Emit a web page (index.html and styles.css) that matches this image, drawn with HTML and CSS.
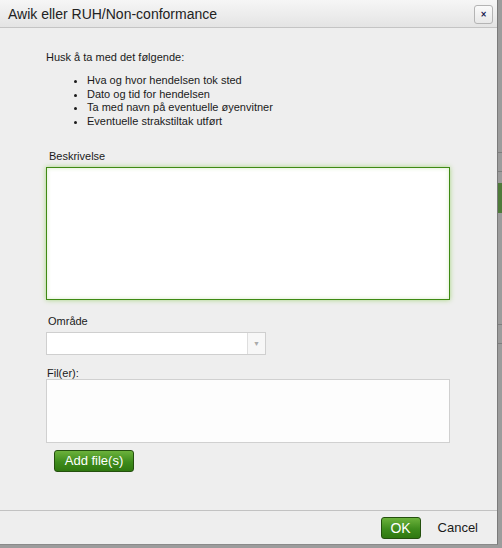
FILE: index.html
```html
<!DOCTYPE html>
<html>
    <head>
        <title>Awik eller RUH/Non-conformance</title>
        <link rel="stylesheet" href="styles.css">
    </head>
    <body>
        <div class="dialog">
            <div class="titlebar">
                <span class="title">Awik eller RUH/Non-conformance</span>
                <button class="close">&#215;</button>
            </div>
            <div class="content">
                <p class="intro">Husk å ta med det følgende:</p>
                <ul class="tips">
                    <li>Hva og hvor hendelsen tok sted</li>
                    <li>Dato og tid for hendelsen</li>
                    <li>Ta med navn på eventuelle øyenvitner</li>
                    <li>Eventuelle strakstiltak utført</li>
                </ul>
                <label class="field-label desc-label">Beskrivelse</label>
                <textarea class="description"></textarea>
                <label class="field-label area-label">Område</label>
                <div class="select">
                    <span class="select-value"></span>
                    <span class="select-arrow">&#9660;</span>
                </div>
                <label class="field-label files-label">Fil(er):</label>
                <div class="files"></div>
                <button class="green add-files">Add file(s)</button>
            </div>
            <div class="footer">
                <button class="green ok">OK</button>
                <button class="cancel">Cancel</button>
            </div>
        </div>
    </body>
</html>
```

FILE: styles.css
```css
body {
    margin: 0;
    height: 548px;
    overflow: hidden;
    font-family: 'Liberation Sans', Arial, sans-serif;
    color: #1a1a1a;
    background: linear-gradient(to bottom,
        #9c9c9c 0, #9c9c9c 152px, #7e7e7e 152px, #7e7e7e 153px,
        #9c9c9c 153px, #9c9c9c 171px, #7e7e7e 171px, #7e7e7e 172px,
        #9c9c9c 172px, #9c9c9c 183px, #4f7a3a 183px, #4f7a3a 213px,
        #9c9c9c 213px, #9c9c9c 324px, #7e7e7e 324px, #7e7e7e 325px,
        #9c9c9c 325px, #9c9c9c 343px, #7e7e7e 343px, #7e7e7e 344px,
        #9c9c9c 344px);
}
.dialog {
    width: 497px;
    height: 544px;
    border-right: 1px solid #7a7a7a;
    border-bottom: 1px solid #8a8a8a;
    background-color: #eeeeee;
    display: flex;
    flex-direction: column;
}
.titlebar {
    height: 27px;
    flex: none;
    display: flex;
    align-items: center;
    justify-content: space-between;
    padding: 0 4px 0 8px;
    background: linear-gradient(to bottom, #f6f6f6, #e4e4e4);
    border-bottom: 1px solid #c4c4c4;
}
.title {
    font-size: 14px;
    color: #222;
}
.close {
    width: 19px;
    height: 19px;
    margin-top: 1px;
    padding: 0;
    border: 1px solid #b4b4b4;
    border-radius: 3px;
    background: linear-gradient(to bottom, #fafafa, #e8e8e8);
    font-family: 'DejaVu Sans', sans-serif;
    font-size: 8px;
    font-weight: bold;
    line-height: 17px;
    color: #10104a;
}
.content {
    flex: 1;
    padding: 23px 0 0 46px;
    display: flex;
    flex-direction: column;
    align-items: flex-start;
    font-size: 11px;
}
.intro {
    margin: 0;
    line-height: 13px;
}
.tips {
    margin: 10px 0 0;
    padding-left: 41px;
    line-height: 13.6px;
}
.field-label {
    display: block;
    line-height: 13px;
    padding-left: 3px;
}
.desc-label {
    margin-top: 22px;
}
.description {
    margin: 4px 0 0;
    width: 404px;
    height: 133px;
    box-sizing: border-box;
    border: 1px solid #3f8a14;
    box-shadow: 0 0 5px #a6d47e, inset 0 0 4px #d8ecc8;
    background-color: #fff;
    resize: none;
    outline: none;
}
.area-label {
    margin-top: 15px;
    padding-left: 2px;
}
.select {
    margin-top: 4px;
    width: 220px;
    height: 23px;
    box-sizing: border-box;
    border: 1px solid #cfcfcf;
    background-color: #fff;
    display: flex;
}
.select-value {
    flex: 1;
}
.select-arrow {
    width: 17px;
    border-left: 1px solid #dedede;
    background-color: #f7f7f7;
    color: #aaa;
    font-size: 7px;
    display: flex;
    align-items: center;
    justify-content: center;
}
.files-label {
    margin-top: 12px;
    padding-left: 1px;
    line-height: 12px;
}
.files {
    width: 404px;
    height: 64px;
    box-sizing: border-box;
    border: 1px solid #d0d0d0;
    background-color: #fdfdfd;
}
.green {
    height: 22px;
    padding: 0;
    border: 1px solid #24500e;
    border-radius: 3px;
    background: linear-gradient(to bottom, #6cb23c, #3e8c1c 55%, #2f7810);
    color: #fff;
    font-family: 'Liberation Sans', Arial, sans-serif;
    font-size: 13px;
    line-height: 20px;
}
.add-files {
    margin: 7px 0 0 8px;
    width: 80px;
}
.footer {
    height: 33px;
    flex: none;
    border-top: 1px solid #c2c2c2;
    display: flex;
    align-items: center;
    justify-content: flex-end;
    padding-right: 19px;
    gap: 17px;
}
.ok {
    width: 40px;
    font-size: 14px;
}
.cancel {
    padding: 0;
    border: none;
    background: none;
    font-family: 'Liberation Sans', Arial, sans-serif;
    font-size: 13px;
    color: #1a1a1a;
}
```
